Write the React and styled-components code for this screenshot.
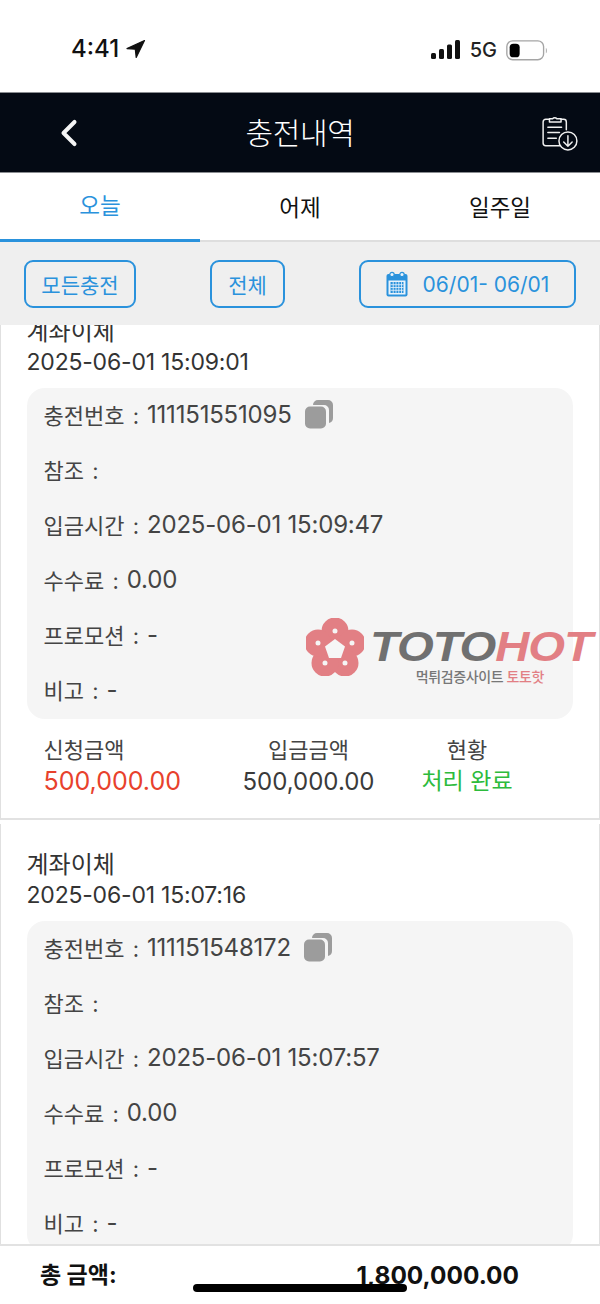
import styled, { createGlobalStyle } from "styled-components";
import { ChevronLeft } from "lucide-react";

const GlobalStyle = createGlobalStyle`
  html, body { margin: 0; padding: 0; background: #fff; }
  * { box-sizing: border-box; }
  body { font-family: Inter, "Noto Sans CJK KR", sans-serif; }
`;

const Screen = styled.div`
  position: relative;
  width: 600px;
  height: 1304px;
  display: flex;
  flex-direction: column;
  overflow: hidden;
  background: #fff;
`;

const StatusBar = styled.div`
  height: 93px;
  flex: none;
  display: flex;
  justify-content: space-between;
  align-items: flex-start;
  padding: 35px 52px 0 71px;
  border-bottom: 1px solid #8a8d91;
`;

const Time = styled.div`
  display: flex;
  align-items: center;
  gap: 7px;
  font-size: 24px;
  line-height: 28px;
  font-weight: 500;
  color: #111;
`;

const StatusRight = styled.div`
  display: flex;
  align-items: center;
  gap: 9px;
  height: 28px;
  margin-top: 1px;
  font-size: 20px;
  font-weight: 500;
  color: #222;
`;

const Header = styled.div`
  height: 80px;
  flex: none;
  display: grid;
  grid-template-columns: 1fr auto 1fr;
  align-items: center;
  padding: 0 21px;
  background: #040a14;
  border-bottom: 1px solid #8a8d91;
`;

const BackWrap = styled.div`
  display: flex;
  margin-left: 26px;
`;

const HeaderTitle = styled.div`
  font-size: 30px;
  font-weight: 300;
  color: #fff;
  letter-spacing: -0.4px;
  margin-top: -4px;
`;

const HeaderAction = styled.div`
  display: flex;
  justify-content: flex-end;
`;

const Tabs = styled.div`
  height: 69px;
  flex: none;
  display: grid;
  grid-template-columns: repeat(3, 1fr);
  border-bottom: 2px solid #dedede;
`;

const Tab = styled.div`
  display: flex;
  align-items: center;
  justify-content: center;
  height: 69px;
  padding-bottom: 4px;
  font-size: 22.5px;
  color: ${(p) => (p.$active ? "#2a92dc" : "#111")};
  border-bottom: ${(p) => (p.$active ? "3px solid #2a92dc" : "none")};
`;

const FilterBar = styled.div`
  height: 83px;
  flex: none;
  display: flex;
  align-items: flex-start;
  justify-content: space-between;
  padding: 18px 24px 0;
  background: #efefef;
`;

const FilterButton = styled.div`
  height: 48px;
  width: ${(p) => p.$width}px;
  display: flex;
  align-items: center;
  justify-content: center;
  gap: 15px;
  border: 2px solid #2a92dc;
  border-radius: 9px;
  font-size: 21px;
  color: #2a92dc;
`;

const List = styled.div`
  flex: 1;
  min-height: 0;
  overflow: hidden;
  background: #fff;
`;

const ListInner = styled.div`
  margin-top: -34px;
`;

const Card = styled.div`
  padding: 26px 26px 21px 25.5px;
  margin-bottom: 4px;
  background: #fff;
  border-left: 1.5px solid #e0e0e0;
  border-right: 1.5px solid #e0e0e0;
  border-bottom: 2px solid #e2e2e2;
`;

const Method = styled.div`
  font-size: 24px;
  line-height: 30px;
  color: #333;
`;

const DateLine = styled.div`
  font-size: 23px;
  line-height: 30px;
  color: #333;
  letter-spacing: -0.2px;
`;

const Panel = styled.div`
  margin-top: 11px;
  padding: 0 17px 1px;
  background: #f5f5f5;
  border-radius: 18px;
`;

const PanelRow = styled.div`
  height: 55px;
  padding-bottom: 3px;
  display: flex;
  align-items: center;
  font-size: 22px;
  word-spacing: 2px;
  color: #444;
`;

const PanelValue = styled.span`
  margin-left: 8px;
  font-size: 24px;
  letter-spacing: -0.2px;
  word-spacing: 0;
`;

const CopyWrap = styled.span`
  display: flex;
  margin-left: 12px;
`;

const Amounts = styled.div`
  display: flex;
  padding: 16px 0 0 17px;
`;

const AmountCol = styled.div`
  width: ${(p) => p.$width}px;
  text-align: ${(p) => p.$align || "center"};
`;

const AmountLabel = styled.div`
  font-size: 22px;
  line-height: 31px;
  color: #444;
`;

const AmountValue = styled.div`
  font-size: ${(p) => p.$size || 24}px;
  line-height: 31px;
  color: ${(p) => p.$color || "#3a3a3a"};
`;

const Footer = styled.div`
  height: 60px;
  flex: none;
  display: flex;
  justify-content: space-between;
  align-items: flex-start;
  padding: 13px 81px 0 40px;
  background: #fff;
  border-top: 2px solid #e2e2e2;
  font-size: 24.4px;
  line-height: 32px;
  font-weight: 700;
  color: #111;
`;

const FooterLabel = styled.span`
  font-size: 23px;
`;

const HomeBar = styled.div`
  position: absolute;
  left: 193px;
  top: 1284px;
  width: 214px;
  height: 8px;
  border-radius: 4px;
  background: #000;
`;

const Watermark = styled.div`
  position: absolute;
  left: 306px;
  top: 618px;
  width: 292px;
  height: 72px;
  display: flex;
  gap: 6px;
`;

const WatermarkText = styled.div`
  display: flex;
  flex-direction: column;
  align-items: center;
`;

const Brand = styled.div`
  font-family: "Liberation Sans", sans-serif;
  font-size: 43px;
  line-height: 56px;
  font-weight: 700;
  font-style: italic;
  letter-spacing: -1px;
  color: #707070;
  white-space: nowrap;
  transform: scaleX(1.1);
  transform-origin: left center;
`;

const BrandHot = styled.span`
  color: #e27f84;
`;

const Tagline = styled.div`
  font-size: 14px;
  line-height: 18px;
  margin: -6px 0 0 18px;
  font-weight: 500;
  letter-spacing: -0.4px;
  color: #777;
`;

const TaglineHot = styled.span`
  color: #e27f84;
`;

const LocationIcon = () => (
  <svg width="20" height="20" viewBox="0 0 20 20">
    <path d="M18.5 1.5 1 9.6l8.3.6.9 8.3z" fill="#111" stroke="#111" strokeWidth="1.2" strokeLinejoin="round" />
  </svg>
);

const SignalIcon = () => (
  <svg width="30" height="20" viewBox="0 0 30 20">
    <rect x="0" y="13" width="5" height="6" rx="1.5" fill="#111" />
    <rect x="8" y="9" width="5" height="10" rx="1.5" fill="#111" />
    <rect x="16" y="4.5" width="5" height="14.5" rx="1.5" fill="#111" />
    <rect x="24" y="0" width="5" height="19" rx="1.5" fill="#111" />
  </svg>
);

const BatteryIcon = () => (
  <svg width="42" height="21" viewBox="0 0 40 20">
    <rect x="0.8" y="0.8" width="35" height="18" rx="5.5" fill="none" stroke="#a5a5a5" strokeWidth="1.3" />
    <rect x="3.5" y="3.5" width="9.5" height="13" rx="3.5" fill="#000" />
    <path d="M38 7.5c1.2.5 1.2 4.5 0 5z" fill="#a5a5a5" />
  </svg>
);

const ClipboardDownIcon = () => (
  <svg width="38" height="38" viewBox="0 0 36 36" fill="none" stroke="#f0f0f0" strokeWidth="1.4" strokeLinecap="round" strokeLinejoin="round">
    <path d="M18 30H4.5A2.5 2.5 0 0 1 2 27.5V7.5A2.5 2.5 0 0 1 4.5 5H8" />
    <path d="M19 5h2.5A2.5 2.5 0 0 1 24 7.5V15" />
    <path d="M8 7V4.5h3a2.5 2.5 0 0 1 4 0h4V7.5H8z" />
    <path d="M6.5 12.5h13M6.5 17.5h11M6.5 23h8" />
    <circle cx="25.5" cy="25.5" r="8.5" />
    <path d="M25.5 20.5v10M21.5 26.5l4 4 4-4" />
  </svg>
);

const CalendarIcon = () => (
  <svg width="22" height="26" viewBox="0 0 22 26">
    <rect x="0.5" y="3" width="21" height="22.5" rx="2" fill="#2a92dc" />
    <rect x="2.5" y="9.5" width="17" height="14" fill="#e9f3fb" />
    <path d="M4.5 11h13v11h-13z" fill="#2a92dc" />
    <path d="M7.2 11v11M10 11v11M12.8 11v11M15.5 11v11M4.5 13.7h13M4.5 16.5h13M4.5 19.3h13" stroke="#e9f3fb" strokeWidth="0.8" />
    <circle cx="6" cy="3.5" r="2.2" fill="#e9f3fb" stroke="#2a92dc" strokeWidth="1.2" />
    <circle cx="16" cy="3.5" r="2.2" fill="#e9f3fb" stroke="#2a92dc" strokeWidth="1.2" />
  </svg>
);

const CopyIcon = () => (
  <svg width="30" height="30" viewBox="0 0 30 30">
    <path d="M9 6a5 5 0 0 1 5-5h10a5 5 0 0 1 5 5v13a5 5 0 0 1-4 5V11a5 5 0 0 0-5-5z" fill="#9c9c9c" />
    <rect x="1" y="7.5" width="21" height="22" rx="5" fill="#9c9c9c" />
  </svg>
);

const FlowerLogo = () => (
  <svg width="58" height="58" viewBox="0 0 58 58">
    <g fill="none" stroke="#e27f84" strokeWidth="11">
      <circle cx="29" cy="13" r="8" />
      <circle cx="46" cy="25" r="8" />
      <circle cx="39" cy="45" r="8" />
      <circle cx="19" cy="45" r="8" />
      <circle cx="12" cy="25" r="8" />
    </g>
    <path d="M29 21 39 28.5 35 40H23L19 28.5z" fill="#f6f6f6" />
  </svg>
);

const records = [
  { date: "2025-06-01 15:09:01", no: "111151551095", paid: "2025-06-01 15:09:47" },
  { date: "2025-06-01 15:07:16", no: "111151548172", paid: "2025-06-01 15:07:57" },
];

export default function App() {
  return (
    <Screen>
      <GlobalStyle />
      <StatusBar>
        <Time>
          4:41 <LocationIcon />
        </Time>
        <StatusRight>
          <SignalIcon />
          5G
          <BatteryIcon />
        </StatusRight>
      </StatusBar>
      <Header>
        <BackWrap>
          <ChevronLeft size={44} color="#f5f5f5" strokeWidth={2.2} />
        </BackWrap>
        <HeaderTitle>충전내역</HeaderTitle>
        <HeaderAction>
          <ClipboardDownIcon />
        </HeaderAction>
      </Header>
      <Tabs>
        <Tab $active>오늘</Tab>
        <Tab>어제</Tab>
        <Tab>일주일</Tab>
      </Tabs>
      <FilterBar>
        <FilterButton $width={112}>모든충전</FilterButton>
        <FilterButton $width={75}>전체</FilterButton>
        <FilterButton $width={217}>
          <CalendarIcon />
          06/01- 06/01
        </FilterButton>
      </FilterBar>
      <List>
        <ListInner>
          {records.map((r) => (
            <Card key={r.no}>
              <Method>계좌이체</Method>
              <DateLine>{r.date}</DateLine>
              <Panel>
                <PanelRow>
                  충전번호 : <PanelValue>{r.no}</PanelValue>
                  <CopyWrap>
                    <CopyIcon />
                  </CopyWrap>
                </PanelRow>
                <PanelRow>참조 :</PanelRow>
                <PanelRow>
                  입금시간 : <PanelValue>{r.paid}</PanelValue>
                </PanelRow>
                <PanelRow>
                  수수료 : <PanelValue>0.00</PanelValue>
                </PanelRow>
                <PanelRow>
                  프로모션 : <PanelValue>-</PanelValue>
                </PanelRow>
                <PanelRow>
                  비고 : <PanelValue>-</PanelValue>
                </PanelRow>
              </Panel>
              <Amounts>
                <AmountCol $width={180} $align="left">
                  <AmountLabel>신청금액</AmountLabel>
                  <AmountValue $color="#e8412c" $size={25}>
                    500,000.00
                  </AmountValue>
                </AmountCol>
                <AmountCol $width={170}>
                  <AmountLabel>입금금액</AmountLabel>
                  <AmountValue>500,000.00</AmountValue>
                </AmountCol>
                <AmountCol $width={147}>
                  <AmountLabel>현황</AmountLabel>
                  <AmountValue $color="#2dbb3c" $size={23}>
                    처리 완료
                  </AmountValue>
                </AmountCol>
              </Amounts>
            </Card>
          ))}
        </ListInner>
      </List>
      <Footer>
        <FooterLabel>총 금액:</FooterLabel>
        <span>1,800,000.00</span>
      </Footer>
      <HomeBar />
      <Watermark>
        <FlowerLogo />
        <WatermarkText>
          <Brand>
            TOTO<BrandHot>HOT</BrandHot>
          </Brand>
          <Tagline>
            먹튀검증사이트 <TaglineHot>토토핫</TaglineHot>
          </Tagline>
        </WatermarkText>
      </Watermark>
    </Screen>
  );
}
